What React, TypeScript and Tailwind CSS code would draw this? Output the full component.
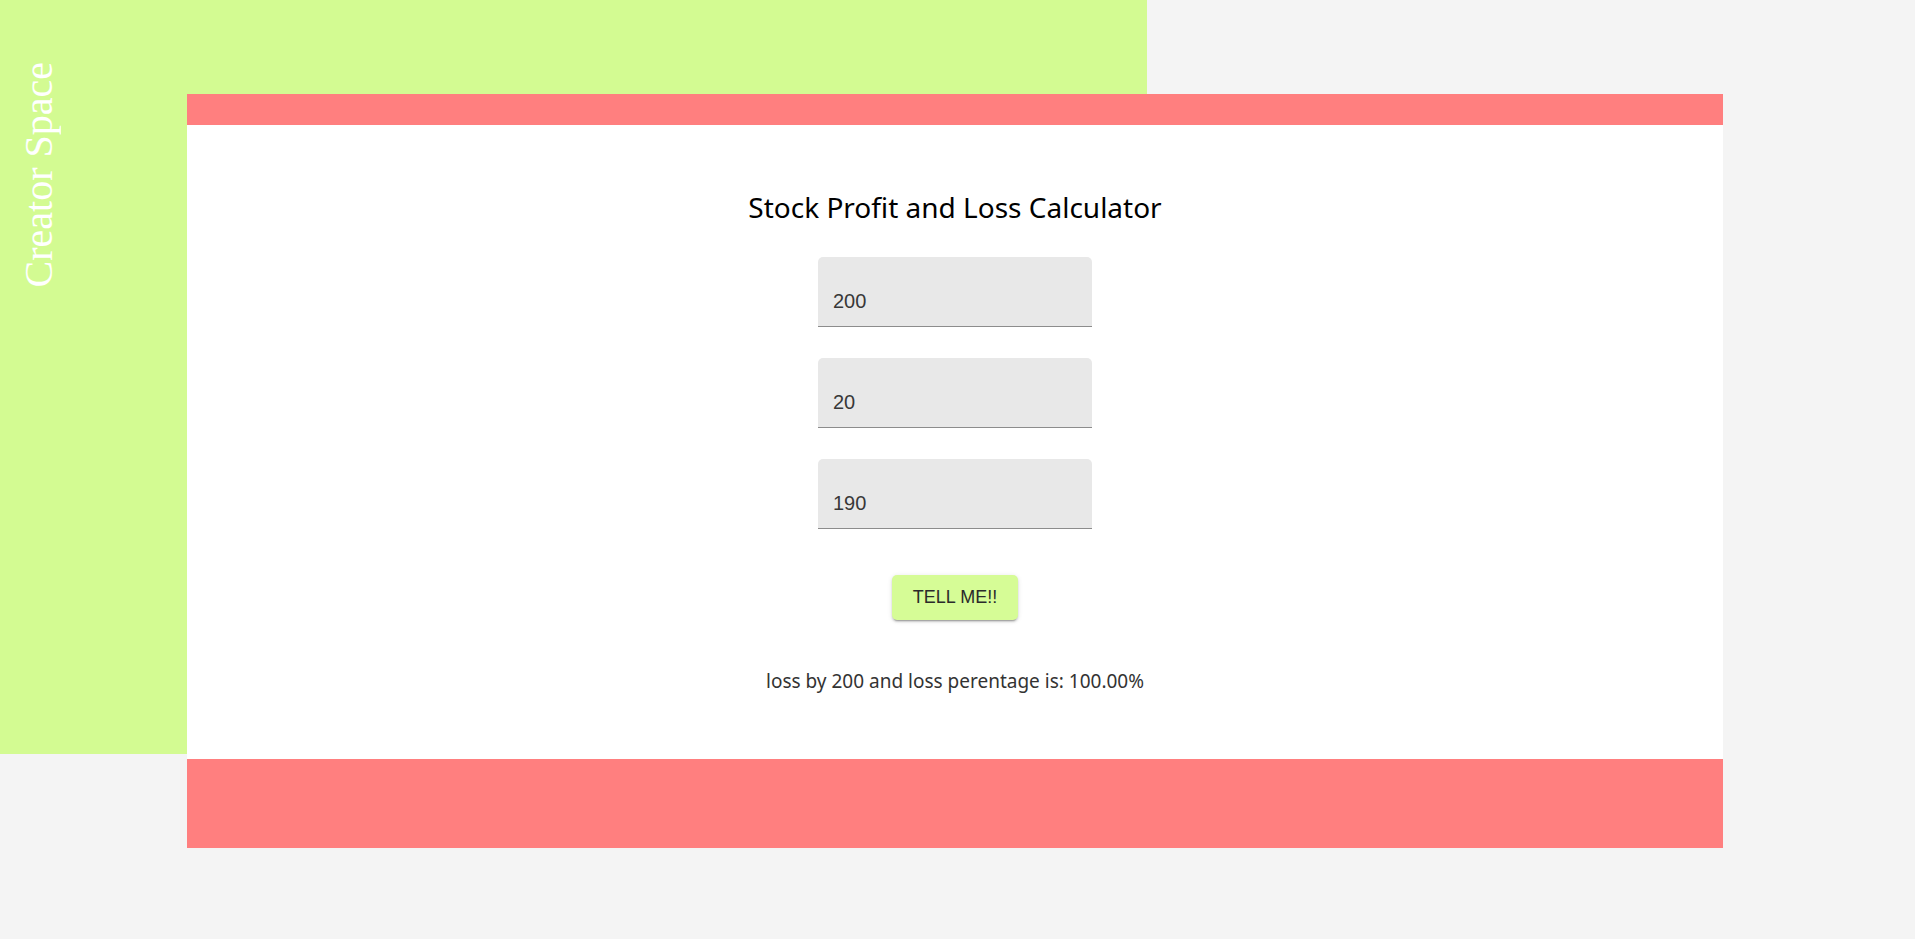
import React from "react";

const fields = ["200", "20", "190"];

export default function App() {
  return (
    <div className="relative min-h-[939px] w-full bg-[#f4f4f4]">
      <div className="absolute left-0 top-0 h-[754px] w-[1147px] bg-[#d3fb92] pl-[19px] pt-[62px]">
        <div className="rotate-180 text-[40px] leading-[40px] text-white [font-family:'Liberation_Serif',serif] [writing-mode:vertical-rl]">
          Creator Space
        </div>
      </div>
      <div className="relative ml-[187px] w-[1536px] pt-[94px]">
        <div className="h-[31px] bg-[#ff7f7f]" />
        <div className="flex h-[634px] flex-col items-center bg-white pt-[68px]">
          <h1 className="text-[28px] leading-[28px] text-black [font-family:'Noto_Sans',sans-serif]">
            Stock Profit and Loss Calculator
          </h1>
          <div className="mt-[36px] flex flex-col gap-[31px]">
            {fields.map((v) => (
              <div
                key={v}
                className="h-[70px] w-[274px] rounded-t-[5px] border-b border-[#8c8c8c] bg-[#e8e8e8] px-[15px] pt-[30px]"
              >
                <div className="text-[20px] leading-[29px] text-[#383838] [font-family:'Liberation_Sans',sans-serif]">
                  {v}
                </div>
              </div>
            ))}
          </div>
          <button className="mt-[46px] flex h-[45px] w-[126px] items-center justify-center rounded-[5px] bg-[#d6fc96] text-[18px] text-[#2a2a2a] shadow-[0_3px_1px_-2px_rgba(0,0,0,0.2),0_2px_2px_0_rgba(0,0,0,0.14),0_1px_5px_0_rgba(0,0,0,0.12)] [font-family:'Liberation_Sans',sans-serif]">
            TELL ME!!
          </button>
          <p className="mt-[52px] text-[19px] leading-[19px] text-[#333333] [font-family:'Noto_Sans',sans-serif]">
            loss by 200 and loss perentage is: 100.00%
          </p>
        </div>
        <div className="h-[89px] bg-[#ff7f7f]" />
      </div>
    </div>
  );
}
